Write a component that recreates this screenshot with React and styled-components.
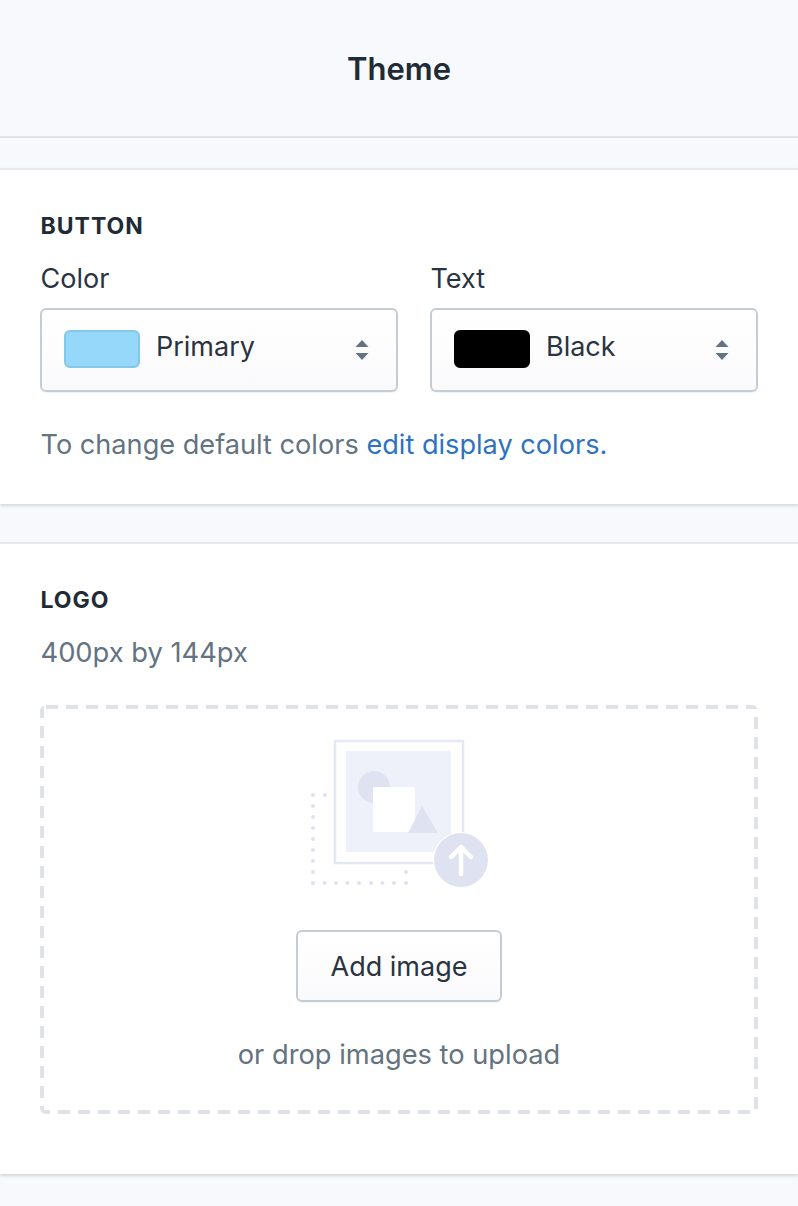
import React from 'react';
import styled, { createGlobalStyle } from 'styled-components';

const GlobalStyle = createGlobalStyle`
    html, body {
        margin: 0;
        padding: 0;
        background: #f7f9fc;
        font-family: Inter, "Noto Sans", sans-serif;
        color: #212b36;
    }
`

const Page = styled.div`
    width: 798px;
    height: 1206px;
    overflow: hidden;
    background: #f7f9fc;
`

const Header = styled.header`
    height: 136px;
    display: flex;
    align-items: center;
    justify-content: center;
    border-bottom: 2px solid #dfe3e8;
`

const Title = styled.h1`
    margin: 0;
    font-size: 31px;
    font-weight: 600;
    color: #212b36;
`

const Section = styled.section`
    background: #fff;
    border-top: 2px solid #e6e9ee;
    box-shadow: 0 2px 3px rgba(63, 63, 68, 0.18);
    margin-top: ${props => props.$gap}px;
    padding: ${props => props.$top}px 40px ${props => props.$bottom}px;
`

const SectionTitle = styled.h2`
    margin: 0 0 0 0.5px;
    font-size: 23px;
    line-height: 28px;
    font-weight: 700;
    letter-spacing: 1px;
    text-transform: uppercase;
    color: #212b36;
`

const Fields = styled.div`
    display: grid;
    grid-template-columns: 358px 328px;
    column-gap: 32px;
    margin-top: 19px;
`

const Label = styled.div`
    font-size: 27px;
    line-height: 40px;
    margin-bottom: 9px;
    padding-left: 0.5px;
    color: #2a3440;
`

const Select = styled.div`
    height: 84px;
    box-sizing: border-box;
    display: flex;
    align-items: center;
    padding: 0 27px 0 22px;
    border: 2px solid #c4cdd5;
    border-radius: 6px;
    background: linear-gradient(180deg, #fff, #fafafc);
    box-shadow: 0 1px 1px rgba(22, 29, 37, 0.05);
`

const Swatch = styled.span`
    width: 76px;
    height: 38px;
    margin-top: -2px;
    box-sizing: border-box;
    border-radius: 6px;
    background: ${props => props.$color};
    border: 2px solid ${props => props.$edge};
`

const SelectText = styled.span`
    flex: 1;
    margin-left: 16px;
    margin-top: -6px;
    font-size: 27px;
    line-height: 36px;
    color: #2a3440;
`

const Hint = styled.p`
    margin: 33px 0 0 0.5px;
    font-size: 27.15px;
    line-height: 40px;
    color: #637381;
`

const Link = styled.a`
    color: #2f72c0;
    text-decoration: none;
`

const Size = styled.p`
    margin: 19px 0 0 0.5px;
    font-size: 27.3px;
    line-height: 40px;
    color: #637381;
`

// painted dashes: the reference has a 12px dash every 20px, with a different phase on each side
const dash = '#dfe3e8'

const DropZone = styled.div`
    margin-top: 32px;
    height: 409px;
    box-sizing: border-box;
    padding-top: 33px;
    display: flex;
    flex-direction: column;
    align-items: center;
    border-radius: 6px;
    background-repeat: no-repeat;
    background-image:
        repeating-linear-gradient(90deg, transparent 0 6px, ${dash} 6px 18px, transparent 18px 20px),
        repeating-linear-gradient(90deg, ${dash} 0 10px, transparent 10px 18px, ${dash} 18px 20px),
        repeating-linear-gradient(180deg, transparent 0 1px, ${dash} 1px 13px, transparent 13px 20px),
        repeating-linear-gradient(180deg, ${dash} 0 4px, transparent 4px 12px, ${dash} 12px 20px);
    background-size: 100% 4px, 100% 4px, 4px 100%, 4px 100%;
    background-position: left top, left bottom, left top, right top;
`

const Illustration = styled.svg`
    display: block;
    width: 180px;
    height: 152px;
    margin-left: 2px;
`

const AddButton = styled.button`
    margin-top: 40px;
    width: 206px;
    height: 72px;
    padding: 0;
    border: 2px solid #c4cdd5;
    border-radius: 6px;
    background: linear-gradient(180deg, #fff, #fafafc);
    box-shadow: 0 1px 1px rgba(22, 29, 37, 0.05);
    font-family: inherit;
    font-size: 27px;
    color: #2a3440;
`

const DropText = styled.div`
    margin-top: 33px;
    font-size: 27.25px;
    line-height: 40px;
    color: #637381;
`

const Arrows = () => (
    <svg width="14" height="22" viewBox="0 0 14 22">
        <path d="M7 1 L13.5 8 H0.5 Z M7 21 L0.5 14 H13.5 Z" fill="#637381" />
    </svg>
)

const leftDots = [57, 68, 79, 90, 101, 112, 123, 134, 145]
const bottomDots = [3, 14.5, 26, 37.5, 49, 61, 72.5, 84, 96]

const UploadArt = () => (
    <Illustration viewBox="0 0 180 152">
        <rect x="25" y="3" width="128" height="122" fill="none" stroke="#e3e8f5" strokeWidth="2.5" />
        <rect x="36" y="13" width="105" height="101" fill="#eef1f9" />
        <circle cx="64" cy="49" r="16" fill="#dfe3f1" />
        <rect x="63" y="49" width="42" height="45" fill="#fff" />
        <path d="M112 68 L128 95 H98 Z" fill="#dfe3f1" />
        <circle cx="151" cy="122" r="28" fill="#fff" />
        <circle cx="151" cy="122" r="27" fill="#dfe3f1" />
        <path d="M151 136 V109 M141 119 L151 109 L161 119" fill="none" stroke="#fff" strokeWidth="4.5" strokeLinecap="round" strokeLinejoin="round" />
        {leftDots.map(y => <circle key={y} cx="3" cy={y} r="2" fill="#dfe3f1" />)}
        <circle cx="15" cy="57" r="2" fill="#dfe3f1" />
        {bottomDots.map(x => <circle key={x} cx={x} cy="145" r="2" fill="#dfe3f1" />)}
        <circle cx="96" cy="134" r="2" fill="#dfe3f1" />
    </Illustration>
)

const SelectField = ({ label, value, color, edge }) => (
    <div>
        <Label>{label}</Label>
        <Select>
            <Swatch $color={color} $edge={edge} />
            <SelectText>{value}</SelectText>
            <Arrows />
        </Select>
    </div>
)

const App = () => (
    <Page>
        <GlobalStyle />
        <Header>
            <Title>Theme</Title>
        </Header>
        <Section $gap={30} $top={42} $bottom={39}>
            <SectionTitle>Button</SectionTitle>
            <Fields>
                <SelectField label="Color" value="Primary" color="#96d8f9" edge="#84c7e8" />
                <SelectField label="Text" value="Black" color="#000" edge="#000" />
            </Fields>
            <Hint>To change default colors <Link>edit display colors.</Link></Hint>
        </Section>
        <Section $gap={38} $top={42} $bottom={60}>
            <SectionTitle>Logo</SectionTitle>
            <Size>400px by 144px</Size>
            <DropZone>
                <UploadArt />
                <AddButton>Add image</AddButton>
                <DropText>or drop images to upload</DropText>
            </DropZone>
        </Section>
    </Page>
);

export default App;
